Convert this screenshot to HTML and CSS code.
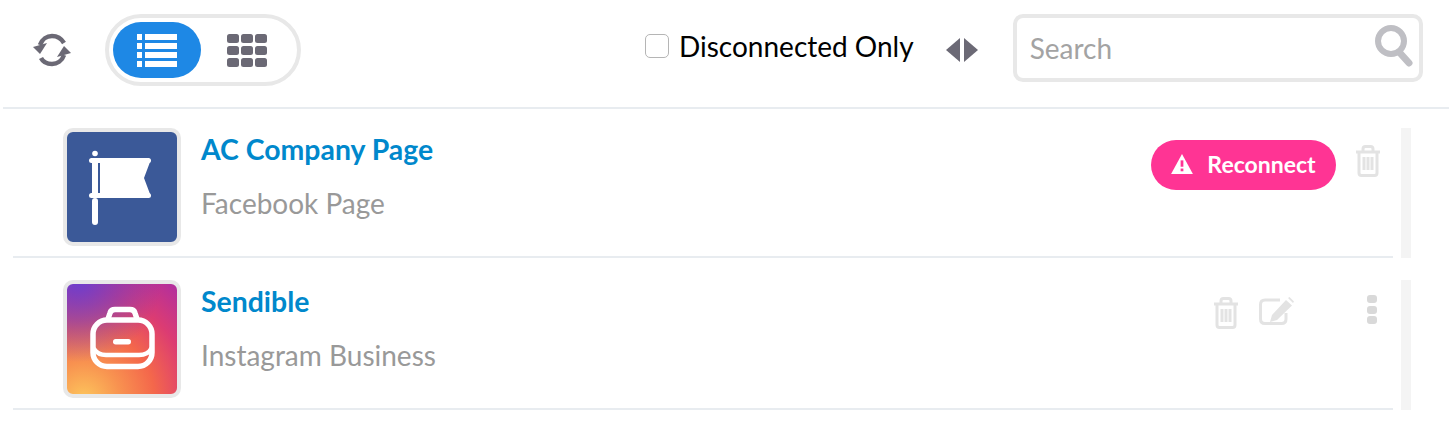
FILE: index.html
```html
<!DOCTYPE html>
<html lang="en">
<head>
  <meta charset="UTF-8" />
  <meta name="viewport" content="width=device-width, initial-scale=1.0"/>
  <title>Accounts</title>
  <link rel="stylesheet" href="styles.css">
</head>
<body>
  <div class="toolbar">
    <button class="refresh-btn" aria-label="Refresh">
      <svg width="40" height="36" viewBox="0 0 40 36">
        <path class="line-dark" d="M8 13C10 7 15 4 20 4c5 0 9 2 12 7"/>
        <path class="line-dark" d="M32 23C30 29 25 32 20 32c-5 0-9-2-11-6"/>
        <path class="fill-dark" d="M1 15l14-4-7 11z"/>
        <path class="fill-dark" d="M39 21l-14 4 7-11z"/>
      </svg>
    </button>

    <div class="view-toggle">
      <button class="view-btn active" aria-label="List view">
        <svg width="40" height="33" viewBox="0 0 40 33">
          <g class="fill-white">
            <rect x="0" y="0" width="5" height="6"/><rect x="8" y="0" width="32" height="6"/>
            <rect x="0" y="9" width="5" height="6"/><rect x="8" y="9" width="32" height="6"/>
            <rect x="0" y="18" width="5" height="6"/><rect x="8" y="18" width="32" height="6"/>
            <rect x="0" y="27" width="5" height="6"/><rect x="8" y="27" width="32" height="6"/>
          </g>
        </svg>
      </button>
      <button class="view-btn" aria-label="Grid view">
        <svg width="40" height="33" viewBox="0 0 40 33">
          <g class="fill-dark">
            <rect x="0" y="0" width="12" height="9" rx="2.5"/><rect x="14" y="0" width="12" height="9" rx="2.5"/><rect x="28" y="0" width="12" height="9" rx="2.5"/>
            <rect x="0" y="12" width="12" height="9" rx="2.5"/><rect x="14" y="12" width="12" height="9" rx="2.5"/><rect x="28" y="12" width="12" height="9" rx="2.5"/>
            <rect x="0" y="24" width="12" height="9" rx="2.5"/><rect x="14" y="24" width="12" height="9" rx="2.5"/><rect x="28" y="24" width="12" height="9" rx="2.5"/>
          </g>
        </svg>
      </button>
    </div>

    <label class="filter">
      <input type="checkbox" />
      <span>Disconnected Only</span>
    </label>

    <svg class="arrows" width="32" height="24" viewBox="0 0 32 24">
      <path class="fill-dark" d="M14 0v24L0 12z"/>
      <path class="fill-dark" d="M18 0v24l14-12z"/>
    </svg>

    <div class="search-box">
      <input type="text" placeholder="Search" />
      <svg width="38" height="42" viewBox="0 0 38 42">
        <circle class="search-ring" cx="16" cy="16" r="13"/>
        <path class="search-handle" d="M25 28l9 10"/>
      </svg>
    </div>
  </div>

  <div class="account-row">
    <div class="account-main">
      <div class="avatar avatar-fb">
        <svg width="110" height="110" viewBox="0 0 110 110">
          <g class="fill-white">
            <circle cx="28" cy="21.500" r="2.800"/>
            <rect x="22" y="26" width="62" height="5" rx="2.500"/>
            <rect x="22" y="61" width="62" height="5" rx="2.500"/>
            <rect x="25" y="66" width="6" height="27" rx="3"/>
            <rect x="25" y="31" width="6" height="30"/>
            <path d="M33 30h50l-6 16 6 16H33z"/>
          </g>
        </svg>
      </div>
      <div class="account-text">
        <a class="account-name">AC Company Page</a>
        <div class="account-type">Facebook Page</div>
      </div>
      <div class="account-actions">
        <button class="reconnect-btn">
          <svg width="22" height="20" viewBox="0 0 24 22">
            <path class="fill-white" d="M12 0L24 22H0z"/>
            <rect class="fill-pink" x="10.500" y="7" width="3" height="7"/>
            <rect class="fill-pink" x="10.500" y="16" width="3" height="3"/>
          </svg>
          Reconnect
        </button>
        <svg class="trash" width="26" height="32" viewBox="0 0 26 32">
          <path class="line-light" d="M1 7h24M8 7V4q0-2.500 2.500-2.500h5Q18 1.500 18 4v3M4 7v21q0 2.500 2.500 2.500h13q2.500 0 2.500-2.500V7M9 12v13M13 12v13M17 12v13"/>
        </svg>
      </div>
    </div>
    <div class="row-strip"></div>
  </div>

  <div class="account-row second">
    <div class="account-main">
      <div class="avatar avatar-ig">
        <svg width="110" height="110" viewBox="0 0 110 110">
          <rect class="line-white" x="26" y="36" width="59" height="46.500" rx="14"/>
          <path class="line-white" d="M41 35l2-6q1-3.500 5-3.500h15q4 0 5 3.500l2 6"/>
          <path class="line-fold" d="M27 65q4 6 12 6h33q9 0 12-6"/>
          <rect class="fill-white" x="46" y="55" width="18" height="5.500" rx="2.700"/>
        </svg>
      </div>
      <div class="account-text">
        <a class="account-name">Sendible</a>
        <div class="account-type">Instagram Business</div>
      </div>
      <div class="account-actions actions-top">
        <svg class="trash" width="26" height="32" viewBox="0 0 26 32">
          <path class="line-light" d="M1 7h24M8 7V4q0-2.500 2.500-2.500h5Q18 1.500 18 4v3M4 7v21q0 2.500 2.500 2.500h13q2.500 0 2.500-2.500V7M9 12v13M13 12v13M17 12v13"/>
        </svg>
        <svg class="edit" width="35" height="28" viewBox="0 0 35 28">
          <path class="line-light" d="M27 16v6q0 4.500-4.500 4.500H6q-4.500 0-4.500-4.500V7.500Q1.500 3 6 3h15"/>
          <path class="fill-light" d="M27 3l6 5.500L18 23l-7 2 2-7zM29 1l1.500-1L35 4.500l-1 1.500z"/>
        </svg>
        <div class="more-dots"><span></span><span></span><span></span></div>
      </div>
    </div>
    <div class="row-strip"></div>
  </div>
</body>
</html>
```

FILE: styles.css
```css
body {
  margin: 0;
  font-family: "Lato", "Open Sans", sans-serif;
  background-color: #fff;
  overflow: hidden;
}
button {
  border: none;
  background: none;
  padding: 0;
  font-family: inherit;
  cursor: pointer;
}
.fill-dark { fill: #6b6975; }
.fill-white { fill: #fff; }
.fill-pink { fill: #ff3494; }
.fill-light { fill: #e3e3e3; }
.line-dark { fill: none; stroke: #6b6975; stroke-width: 4.5; }
.line-white { fill: none; stroke: #fff; stroke-width: 5.5; stroke-linecap: round; }
.line-fold { fill: none; stroke: #fff; stroke-width: 4.5; stroke-linecap: round; }
.line-light { fill: none; stroke: #e3e3e3; stroke-width: 3; }

/* top bar */
.toolbar {
  display: flex;
  align-items: center;
  height: 109px;
  margin-left: 3px;
  padding-left: 29px;
  padding-bottom: 7px;
  border-bottom: 2px solid #e8ecf0;
  box-sizing: border-box;
}
.refresh-btn {
  display: flex;
  width: 40px;
  height: 36px;
  margin-right: 33px;
}
.view-toggle {
  display: flex;
  width: 196px;
  height: 72px;
  padding: 4px;
  border: 4px solid #e8e8e8;
  border-radius: 36px;
  box-sizing: border-box;
}
.view-btn {
  display: flex;
  align-items: center;
  justify-content: center;
  width: 88px;
  height: 56px;
  padding-left: 4px;
  border-radius: 28px;
}
.view-btn.active {
  padding-left: 0;
  background-color: #1e88e5;
}
.filter {
  display: flex;
  align-items: center;
  gap: 10px;
  margin-left: 344px;
  margin-bottom: 8px;
  font-size: 28px;
  color: #000;
}
.filter input {
  appearance: none;
  width: 24px;
  height: 24px;
  margin: 0;
  border: 1px solid #b5b5b5;
  border-radius: 5px;
  background-color: #fff;
}
.arrows {
  margin-left: 32px;
  margin-right: 35px;
}
.search-box {
  display: flex;
  align-items: center;
  width: 410px;
  height: 68px;
  margin-bottom: 4px;
  padding: 0 6px 0 13px;
  border: 4px solid #e8e8e8;
  border-radius: 10px;
  box-sizing: border-box;
}
.search-box input {
  flex: 1;
  min-width: 0;
  border: none;
  outline: none;
  padding: 0;
  font-family: inherit;
  font-size: 28px;
}
.search-box input::placeholder {
  color: #a3a3a3;
}
.search-box svg {
  margin-bottom: 4px;
}
.search-ring { fill: none; stroke: #bfbfc4; stroke-width: 6; }
.search-handle { fill: none; stroke: #bfbfc4; stroke-width: 7; stroke-linecap: round; }

/* account list */
.account-row {
  display: flex;
  gap: 8px;
  height: 149px;
  margin-left: 13px;
}
.account-row.second {
  height: 150px;
  margin-top: 2px;
}
.account-main {
  display: flex;
  flex: none;
  width: 1380px;
  padding: 19px 12px 0 50px;
  border-bottom: 2px solid #e8ecf0;
  box-sizing: border-box;
}
.second .account-main {
  padding-top: 20px;
}
.avatar {
  width: 118px;
  height: 118px;
  border: 4px solid #e8e8e8;
  border-radius: 10px;
  box-sizing: border-box;
  overflow: hidden;
}
.avatar svg {
  display: block;
}
.avatar-fb {
  background-color: #3b5998;
}
.avatar-ig {
  background:
    radial-gradient(circle at 10% -5%, #6a3fd0 0%, rgba(122, 60, 190, 0.6) 28%, rgba(122, 60, 190, 0) 55%),
    radial-gradient(circle at 15% 105%, #fdc65c 0%, #f89250 25%, #f4674b 48%, #dc3c72 72%, #b02ea0 100%);
}
.account-text {
  flex: 1;
  margin-left: 20px;
}
.account-name {
  display: block;
  margin-top: 3px;
  font-size: 28.4px;
  line-height: 36px;
  font-weight: 700;
  color: #0088cc;
}
.account-type {
  margin-top: 18px;
  font-size: 28px;
  line-height: 36px;
  color: #999;
}
.account-actions {
  display: flex;
  align-items: center;
  gap: 19px;
  height: 74px;
}
.account-actions > .trash {
  margin-bottom: 9px;
}
.actions-top {
  align-items: flex-start;
  gap: 20px;
  height: 76px;
  padding-top: 17px;
  box-sizing: border-box;
  margin-right: 4px;
}
.actions-top > .trash {
  margin-bottom: 0;
}
.reconnect-btn {
  display: flex;
  align-items: center;
  justify-content: center;
  gap: 14px;
  width: 185px;
  height: 50px;
  padding-bottom: 2px;
  border-radius: 25px;
  background-color: #ff3494;
  color: #fff;
  font-size: 23px;
  font-weight: 700;
}
.more-dots {
  display: flex;
  flex-direction: column;
  gap: 2.5px;
  margin-left: 53px;
  margin-top: -2px;
}
.more-dots span {
  width: 10px;
  height: 8px;
  border-radius: 3px;
  background-color: #d9d9d9;
}
.row-strip {
  width: 10px;
  margin-top: 19px;
  background-color: #f4f4f4;
}
.second .row-strip {
  margin-top: 20px;
}
```
